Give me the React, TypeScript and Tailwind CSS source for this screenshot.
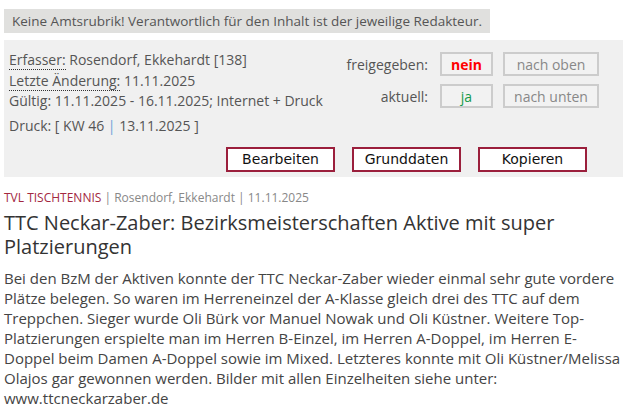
import React from 'react';

const font = { fontFamily: '"Open Sans", "Liberation Sans", sans-serif' };

const StatusBox = ({ children, className = '' }: { children: React.ReactNode; className?: string }) => (
  <span className={`flex h-[24px] items-center justify-center border-2 border-[#cccccc] bg-[#f2f2f2] ${className}`}>
    {children}
  </span>
);

const ActionButton = ({ label }: { label: string }) => (
  <button
    type="button"
    className="h-[25px] w-[109px] border-2 border-[#9b1f3c] bg-white text-[14px] text-[#111]"
  >
    {label}
  </button>
);

export default function App() {
  return (
    <div className="min-h-screen bg-white px-[4px] pt-[9px] text-[#444]" style={font}>
      {/* notice */}
      <div className="w-[486px] bg-[#e0e0de] py-[3px] pl-[8px] text-[13.5px] leading-[18px] text-[#555]">
        Keine Amtsrubrik! Verantwortlich für den Inhalt ist der jeweilige Redakteur.
      </div>

      {/* meta panel */}
      <div className="mt-[7px] w-[619px] bg-[#f0f0f0] pb-[5px] pl-[5px] pt-[10px] text-[14px] text-[#555]">
        <div className="flex justify-between pr-[24px]">
          <div className="leading-[20.5px]">
            <div>
              <span className="border-b border-dotted border-[#333]">Erfasser:</span> Rosendorf, Ekkehardt [138]
            </div>
            <div>
              <span className="border-b border-dotted border-[#333]">Letzte Änderung:</span> 11.11.2025
            </div>
            <div>Gültig: 11.11.2025 - 16.11.2025; Internet + Druck</div>
            <div className="mt-[4px]">
              Druck: [ KW 46 <span className="text-[#6fa0d8]">|</span> 13.11.2025 ]
            </div>
          </div>
          <div className="flex flex-col items-end gap-[8px] pt-[2px]">
            <div className="flex items-center">
              <span className="mr-[12px]">freigegeben:</span>
              <StatusBox className="w-[53px] font-bold text-[#ff0000]">nein</StatusBox>
              <StatusBox className="ml-[10px] w-[96px] text-[#888]">nach oben</StatusBox>
            </div>
            <div className="flex items-center">
              <span className="mr-[12px]">aktuell:</span>
              <StatusBox className="w-[53px] text-[#159a4a]">ja</StatusBox>
              <StatusBox className="ml-[10px] w-[96px] text-[#888]">nach unten</StatusBox>
            </div>
          </div>
        </div>
        <div className="mt-[11px] flex justify-end gap-[17px] pr-[36px]" style={{ fontFamily: '"DejaVu Sans", "Noto Sans", sans-serif' }}>
          <ActionButton label="Bearbeiten" />
          <ActionButton label="Grunddaten" />
          <ActionButton label="Kopieren" />
        </div>
      </div>

      {/* article */}
      <div className="mt-[13px] text-[12px] leading-[16px] text-[#888]">
        <span className="text-[#a3283f]">TVL TISCHTENNIS</span> | Rosendorf, Ekkehardt | 11.11.2025
      </div>
      <h1 className="mt-[5px] text-[20px] leading-[24px] text-[#333]">
        TTC Neckar-Zaber: Bezirksmeisterschaften Aktive mit super Platzierungen
      </h1>
      <p className="mt-[9px] w-[620px] text-[15px] leading-[20px] text-[#444]">
        Bei den BzM der Aktiven konnte der TTC Neckar-Zaber wieder einmal sehr gute vordere Plätze belegen. So waren im
        Herreneinzel der A-Klasse gleich drei des TTC auf dem Treppchen. Sieger wurde Oli Bürk vor Manuel Nowak und Oli
        Küstner. Weitere Top-Platzierungen erspielte man im Herren B-Einzel, im Herren A-Doppel, im Herren E-Doppel beim
        Damen A-Doppel sowie im Mixed. Letzteres konnte mit Oli Küstner/Melissa Olajos gar gewonnen werden. Bilder mit allen
        Einzelheiten siehe unter: www.ttcneckarzaber.de
      </p>
    </div>
  );
}
